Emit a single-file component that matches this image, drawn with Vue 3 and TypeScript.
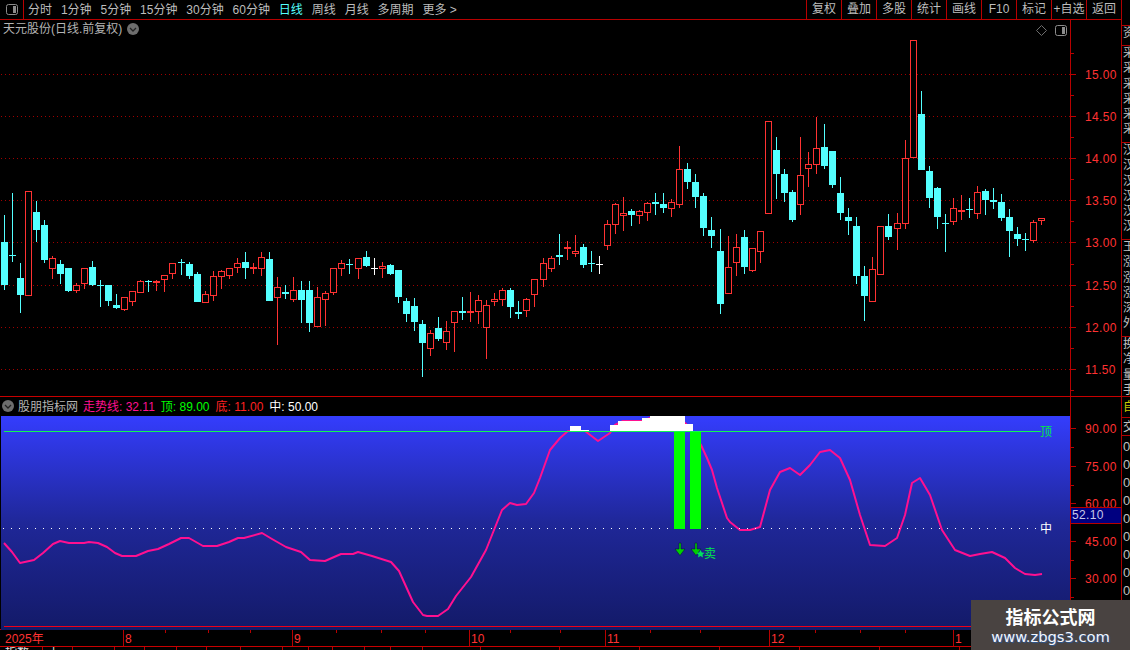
<script setup lang="ts">
type Kind = 'c' | 'r' | 'w'
interface Candle { x: number; kind: Kind; wt: number; wb: number; bt: number; bb: number }

// kind, wick top, wick bottom, body top, body bottom — values are 3x offsets from the group's base y
const groups: [number, string][] = [
  [180, 'c105,330,186,315 c39,246,226,228 c249,399,294,345 r34,347,34,347 c63,186,96,150 c120,249,135,240 r228,297,234,267 c240,312,252,282 c264,336,264,333 r309,339,315,333 r264,327,264,312 c243,318,261,315 c300,381,315,318 c315,378,315,363 c342,387,375,384 r351,393,351,390 r333,378,333,366 r300,339,303,339 c300,336,303,306 r300,333,303,309 r285,336,285,300 r249,297,249,282 c237,285,246,249 c246,297,252,288 c276,366,282,366 r333,369,342,369 r273,363,288,348 r270,327,273,291 r264,297,264,288 r234,279,249,264 c216,297,246,264 r249,282,261,267 r216,288,231,267 c216,363,237,363 r291,495,321,354 c315,357,336,342 r291,366,330,360'],
  [190, 'c273,399,300,330 c273,426,300,399 r291,411,321,411 r303,408,309,330 r234,315,234,309 r210,258,219,237 c207,252,222,225 r204,267,204,237 c183,231,201,228 w204,255,234,237 r216,264,228,237 c222,255,225,252 c240,339,240,321 c324,396,333,372 c324,423,348,396 c390,561,402,459 r420,498,429,477 c381,453,414,447 r393,480,423,459 r363,486,363,399 c321,390,363,369 r306,396,363,369 r315,402,330,366 r330,507,345,414 r309,348,327,336 r294,348,300,330 c294,384,300,351 c333,387,366,372 r324,381,327,363 r267,351,267,315'],
  [130, 'r384,471,399,450 r378,426,384,417 c312,405,375,381 r333,390,351,357 r315,381,363,372 c342,414,351,405 c363,426,399,402 w378,432,402,405 r270,360,282,348 r219,312,222,285 r201,303,249,258 c237,288,243,255 r240,282,243,258 r216,273,219,249 c189,255,216,222 c189,249,222,234 r207,261,216,237 r48,234,117,225 c99,177,117,156 c132,234,156,201 c189,318,198,294 c261,354,300,318 c297,552,363,522 r318,492,411,492 r312,438,351,399 c300,432,321,411 r354,426,354,423 r303,399,303,366'],
  [30, 'r273,552,273,552 c321,507,360,432 c417,516,432,489 c480,576,486,570 r321,555,435,525 r366,471,402,417 r261,432,354,405 c282,417,351,408 c363,474,363,465 c441,570,489,549 c534,615,561,573 c561,762,588,738 c708,873,738,798 r681,816,717,816 r588,735,588,735 c552,630,588,621 r549,660,579,597 r330,597,384,582 r30,384,30,384 c183,420,252,420 c408,534,423,504 c471,597,474,561 c552,666,579,582 r504,585,534,576 r495,570,540,546 c504,564,537,540 r468,567,486,552 c477,555,483,510 c474,537,510,516 c492,573,516,564 c537,681,561,603 c591,648,612,627 c609,663,627,630 r570,639,576,633 r564,585,564,573'],
]

const candles: Candle[] = []
for (const [base, s] of groups) {
  for (const tok of s.split(' ')) {
    const kind = tok[0] as Kind
    const [a, b, c, d] = tok.slice(1).split(',').map(Number)
    const i = candles.length
    candles.push({
      x: 4 + 8 * i + Math.floor((i + 1) / 22.39),
      kind,
      wt: Math.round(base + a / 3),
      wb: Math.round(base + b / 3),
      bt: Math.round(base + c / 3),
      bb: Math.round(base + d / 3),
    })
  }
}

const colors: Record<Kind, string> = { c: '#54ffff', r: '#ff3232', w: '#ffffff' }

const upperGrid = [74, 116, 158, 200, 242, 285, 327, 369]
const upperLabels = [
  { t: '15.00', y: 74 }, { t: '14.50', y: 116 }, { t: '14.00', y: 158 }, { t: '13.50', y: 200 },
  { t: '13.00', y: 242 }, { t: '12.50', y: 285 }, { t: '12.00', y: 327 }, { t: '11.50', y: 369 },
]
const upperMinor = [95, 137, 179, 221, 264, 306, 348, 390, 53]

const lowerLabels = [
  { t: '90.00', y: 428 }, { t: '75.00', y: 466 }, { t: '60.00', y: 503 }, { t: '45.00', y: 541 }, { t: '30.00', y: 578 },
]
const lowerMinor = [447, 485, 522, 560, 597, 616]

const curve: [number, number][] = [
  [4,543],[12,552],[20,563],[34,560],[43,553],[53,544],[60,541],[69,543],[84,543],[89,542],[98,543],[107,547],[115,553],[122,556],[136,556],[148,551],[158,549],[169,544],[181,538],[189,538],[203,546],[217,546],[229,542],[238,538],[244,538],[262,533],[272,539],[286,547],[301,552],[310,560],[325,561],[341,554],[353,554],[358,552],[372,556],[391,562],[399,571],[413,602],[423,615],[427,616],[438,616],[448,609],[456,596],[471,577],[486,550],[502,510],[510,503],[517,505],[526,504],[534,493],[540,478],[550,450],[560,438],[568,431],[585,431],[598,441],[610,433],[615,425],[623,421],[642,421],[650,418],[680,418],[690,428],[701,445],[707,458],[712,470],[717,488],[727,518],[730,522],[740,530],[750,530],[760,527],[770,490],[780,472],[790,468],[800,475],[810,465],[820,452],[830,450],[840,458],[850,480],[860,515],[870,545],[885,546],[897,538],[905,515],[912,483],[920,478],[930,495],[942,530],[955,550],[970,556],[980,554],[992,552],[1005,558],[1015,568],[1025,574],[1035,575],[1042,574],
]
const curvePoints = curve.map(p => p.join(',')).join(' ')

const caps = [
  [570, 426, 581], [581, 430, 589], [610, 425, 618], [618, 421, 642], [642, 418, 650], [650, 416, 685], [685, 424, 693],
].map(([x, y, x2]) => ({ x, y, w: x2 - x, h: 431 - y }))

const leftTools = ['分时', '1分钟', '5分钟', '15分钟', '30分钟', '60分钟', '日线', '周线', '月线', '多周期', '更多 >']
const rightTools = ['复权', '叠加', '多股', '统计', '画线', 'F10', '标记', '+自选', '返回']

const months = [
  { t: '8', x: 123 }, { t: '9', x: 292 }, { t: '10', x: 469 }, { t: '11', x: 605 }, { t: '12', x: 769 }, { t: '1', x: 953 },
]
const dateTicks = [165, 208, 250, 336, 381, 425, 510, 560, 650, 700, 815, 860, 905, 1000]

const bottomStops = [43, 73, 115, 145, 177, 207, 241, 283, 309, 333, 365, 391, 423, 481, 560, 640, 720, 800, 880, 960]
const bottomCells = bottomStops.map((s, i) => ({ w: s - (i ? bottomStops[i - 1] : 0) }))

const stripCells = [
  { h: 20, t: ['资'] },
  { h: 97, t: ['采', '采', '采', '采', '采', '采'] },
  { h: 97, t: ['汉', '汉', '汉', '汉', '汉', '汉'] },
  { h: 97, t: ['玉', '涨', '涨', '涨', '深', '外'] },
  { h: 60, t: ['换', '净', '量', '手'] },
]
const stripDigits = Array.from({ length: 9 }, () => '0')
</script>

<template>
  <div class="app">
    <div class="left">
      <div class="toolbar">
        <div class="winbtn">
          <svg width="12" height="11" viewBox="0 0 12 11">
            <rect x="0.5" y="0.5" width="11" height="10" rx="2" fill="none" stroke="#8c8c8c" />
            <rect x="7" y="2" width="3" height="7" fill="#8c8c8c" />
          </svg>
        </div>
        <div class="tools">
          <span v-for="t in leftTools" :key="t" :class="{ on: t === '日线' }">{{ t }}</span>
        </div>
        <div class="rtools">
          <span v-for="t in rightTools" :key="t">{{ t }}</span>
        </div>
      </div>

      <div class="pane upper">
        <div class="chart">
          <svg class="chart-svg" width="1070" height="376" viewBox="0 20 1070 376" shape-rendering="crispEdges">
            <defs>
              <pattern id="dots" x="0" y="0" width="4" height="1" patternUnits="userSpaceOnUse">
                <rect x="1" y="0" width="1" height="1" fill="#a00000" />
              </pattern>
            </defs>
            <rect v-for="y in upperGrid" :key="y" x="0" :y="y" width="1070" height="1" fill="url(#dots)" />
            <g v-for="(c, i) in candles" :key="i">
              <line v-if="c.wt < c.wb" :x1="c.x + 0.5" :y1="c.wt" :x2="c.x + 0.5" :y2="c.wb" :stroke="colors[c.kind]" />
              <rect v-if="c.kind === 'r' && c.bb - c.bt > 2" :x="c.x - 2.5" :y="c.bt + 0.5" width="6" :height="c.bb - c.bt - 1" fill="#000" :stroke="colors.r" />
              <rect v-else :x="c.x - 3" :y="c.bt" width="7" :height="Math.max(1, c.bb - c.bt)" :fill="colors[c.kind]" />
            </g>
          </svg>
          <div class="title">
            <span>天元股份(日线.前复权)</span>
            <svg width="12" height="12" viewBox="0 0 12 12">
              <circle cx="6" cy="6" r="6" fill="#6e6e6e" />
              <path d="M3 5 L6 8 L9 5" fill="none" stroke="#222" stroke-width="1.3" />
            </svg>
          </div>
          <div class="corner">
            <svg width="11" height="11" viewBox="0 0 11 11">
              <path d="M5.5 0.5 L10.5 5.5 L5.5 10.5 L0.5 5.5 Z" fill="none" stroke="#6e6e6e" />
            </svg>
            <svg width="12" height="11" viewBox="0 0 12 11">
              <rect x="0.5" y="0.5" width="11" height="10" rx="2" fill="none" stroke="#8c8c8c" />
              <rect x="7" y="2" width="3" height="7" fill="#8c8c8c" />
            </svg>
          </div>
        </div>
        <svg class="axis" width="50" height="376" viewBox="1071 20 50 376" shape-rendering="crispEdges">
          <template v-for="l in upperLabels" :key="l.t">
            <line x1="1071" :y1="l.y + 0.5" x2="1076" :y2="l.y + 0.5" class="tick" />
            <text x="1085" :y="l.y + 5" class="axis-text">{{ l.t }}</text>
          </template>
          <line v-for="y in upperMinor" :key="y" x1="1071" :y1="y + 0.5" x2="1074" :y2="y + 0.5" class="tick" />
        </svg>
      </div>

      <div class="pane lower">
        <div class="chart">
          <div class="legend">
            <svg width="12" height="12" viewBox="0 0 12 12">
              <circle cx="6" cy="6" r="6" fill="#6e6e6e" />
              <path d="M3 5 L6 8 L9 5" fill="none" stroke="#222" stroke-width="1.3" />
            </svg>
            <span class="gray">股朋指标网</span>
            <span class="pink">走势线: 32.11</span>
            <span class="green">顶: 89.00</span>
            <span class="red">底: 11.00</span>
            <span class="white">中: 50.00</span>
          </div>
          <svg class="chart-svg" width="1070" height="214" viewBox="0 416 1070 214">
            <defs>
              <linearGradient id="panel" x1="0" y1="0" x2="0" y2="1">
                <stop offset="0" stop-color="#343dfd" />
                <stop offset="0.5" stop-color="#1f2798" />
                <stop offset="1" stop-color="#131a68" />
              </linearGradient>
            </defs>
            <rect x="1" y="416" width="1069" height="214" fill="url(#panel)" />
            <polyline :points="curvePoints" fill="none" stroke="#ff1090" stroke-width="2" stroke-linejoin="round" />
            <rect v-for="(c, i) in caps" :key="i" :x="c.x" :y="c.y" :width="c.w" :height="c.h" fill="#fff" shape-rendering="crispEdges" />
            <line x1="4" y1="431.5" x2="1041" y2="431.5" stroke="#10f850" shape-rendering="crispEdges" />
            <line x1="3" y1="528.5" x2="1040" y2="528.5" stroke="#fff" stroke-dasharray="1 7" shape-rendering="crispEdges" />
            <rect x="674" y="432" width="11" height="97" fill="#00ff00" shape-rendering="crispEdges" />
            <rect x="690" y="432" width="11" height="97" fill="#00ff00" shape-rendering="crispEdges" />
            <line x1="4" y1="626.5" x2="1070" y2="626.5" stroke="#f00018" shape-rendering="crispEdges" />
            <g v-for="x in [680, 696]" :key="x">
              <path :d="`M${x - 1} 543 h2 v6 h4 l-5 6.5 l-5 -6.5 h4 z`" fill="#00d000" stroke="#04083a" stroke-width="0.5" />
            </g>
            <path d="M700.5 550 l1.3 2.4 l2.7 .4 l-2 1.9 l.5 2.7 l-2.5 -1.3 l-2.5 1.3 l.5 -2.7 l-2 -1.9 l2.7 -.4 z" fill="#00e060" />
            <text x="704" y="558" class="mark green-fill">卖</text>
            <text x="1040" y="436" class="mark green-fill">顶</text>
            <text x="1040" y="533" class="mark white-fill">中</text>
          </svg>
        </div>
        <div class="axis-wrap">
          <svg class="axis" width="50" height="233" viewBox="1071 397 50 233" shape-rendering="crispEdges">
            <template v-for="l in lowerLabels" :key="l.t">
              <line x1="1071" :y1="l.y + 0.5" x2="1076" :y2="l.y + 0.5" class="tick" />
              <text x="1085" :y="l.y + 5" class="axis-text">{{ l.t }}</text>
            </template>
            <line v-for="y in lowerMinor" :key="y" x1="1071" :y1="y + 0.5" x2="1074" :y2="y + 0.5" class="tick" />
          </svg>
          <div class="cursor">52.10</div>
        </div>
      </div>

      <svg class="dates" width="1121" height="16" viewBox="0 630 1121 16" shape-rendering="crispEdges">
        <text x="5" y="643" class="date-text">2025年</text>
        <template v-for="m in months" :key="m.t">
          <line :x1="m.x + 0.5" y1="630" :x2="m.x + 0.5" y2="646" class="tick" />
          <text :x="m.x + 2" y="643" class="date-text">{{ m.t }}</text>
        </template>
        <line v-for="x in dateTicks" :key="x" :x1="x + 0.5" y1="630" :x2="x + 0.5" y2="633" class="tick" />
      </svg>

      <div class="bottom">
        <span v-for="(c, i) in bottomCells" :key="i" :style="{ width: c.w + 'px' }">{{ i === 0 ? '指数' : i === 1 ? '上' : '' }}</span>
      </div>
    </div>

    <div class="strip">
      <div class="strip-top">
        <div v-for="(c, i) in stripCells" :key="i" class="strip-cell" :style="{ height: c.h + 'px' }">
          <span v-for="(ch, j) in c.t" :key="j">{{ ch }}</span>
        </div>
      </div>
      <div class="strip-self">自</div>
      <div class="strip-head">交</div>
      <div class="strip-nums">
        <span v-for="(d, i) in stripDigits" :key="i">{{ d }}</span>
      </div>
    </div>

    <div class="watermark">
      <div class="wm-title">指标公式网</div>
      <div class="wm-url">www.zbgs3.com</div>
    </div>
  </div>
</template>

<style scoped>
.app {
  position: relative;
  display: flex;
  width: 1130px;
  height: 650px;
  overflow: hidden;
  background: #000;
  font-family: "Liberation Sans", "Noto Sans CJK SC", sans-serif;
  font-size: 12px;
  color: #bdbdbd;
}
.left {
  display: flex;
  flex-direction: column;
  width: 1122px;
  flex: none;
  border-right: 1px solid #b00000;
  box-sizing: border-box;
}
.toolbar {
  display: flex;
  align-items: center;
  height: 20px;
  flex: none;
  border-bottom: 1px solid #b80000;
  box-sizing: border-box;
  line-height: 18px;
}
.winbtn {
  display: flex;
  align-items: center;
  justify-content: center;
  width: 24px;
  height: 19px;
  box-sizing: border-box;
  border-right: 1px solid #b80000;
}
.tools {
  display: flex;
  gap: 8.9px;
  margin-left: 4px;
  flex: 1;
}
.tools .on {
  color: #54ffff;
}
.rtools {
  display: flex;
}
.rtools span {
  width: 35px;
  height: 19px;
  text-align: center;
  border-left: 1px solid #b80000;
  box-sizing: border-box;
  white-space: nowrap;
}
.pane {
  display: flex;
  flex: none;
}
.upper {
  height: 377px;
  border-bottom: 1px solid #c80000;
  box-sizing: border-box;
}
.lower {
  height: 233px;
}
.chart {
  position: relative;
  width: 1070px;
  flex: none;
  border-right: 1px solid #b80000;
}
.chart-svg,
.axis,
.dates {
  display: block;
  flex: none;
}
.tick {
  stroke: #b80000;
}
.axis-text {
  fill: #ff3232;
  font-family: "Liberation Sans", sans-serif;
  font-size: 12px;
  letter-spacing: 0.35px;
}
.date-text {
  fill: #ff3232;
  font-family: "Liberation Sans", "Noto Sans CJK SC", sans-serif;
  font-size: 12px;
}
.title {
  position: absolute;
  left: 3px;
  top: 0;
  display: flex;
  align-items: center;
  gap: 5px;
  line-height: 18px;
  color: #b4b4b4;
}
.corner {
  position: absolute;
  right: 3px;
  top: 5px;
  display: flex;
  align-items: center;
  gap: 8px;
}
.legend {
  display: flex;
  align-items: center;
  height: 19px;
  padding: 0 0 2px 2px;
  box-sizing: border-box;
  white-space: nowrap;
}
.legend span {
  margin-left: 6px;
}
.legend .gray {
  margin-left: 4px;
  color: #b4b4b4;
}
.legend .pink {
  margin-left: 5px;
  color: #ff1090;
}
.legend .green {
  color: #00ff00;
}
.legend .red {
  color: #ff2020;
}
.legend .white {
  color: #fff;
}
.mark {
  font-size: 12px;
  font-family: "Noto Sans CJK SC", sans-serif;
}
.green-fill {
  fill: #00e848;
}
.white-fill {
  fill: #fff;
}
.axis-wrap {
  position: relative;
  width: 50px;
}
.cursor {
  position: absolute;
  left: 0;
  right: 0;
  top: 110px;
  height: 17px;
  box-sizing: border-box;
  background: #000080;
  border-top: 1px solid #b80000;
  border-bottom: 1px solid #b80000;
  color: #c8c8e8;
  line-height: 15px;
  padding-left: 1px;
  font-family: "Liberation Sans", sans-serif;
  letter-spacing: 0.35px;
}
.dates {
  border-top: 1px solid #c80000;
  margin-top: -1px;
}
.bottom {
  display: flex;
  height: 5px;
  overflow: hidden;
  border-top: 1px solid #c80000;
  box-sizing: border-box;
  color: #e0e0e0;
  line-height: 12px;
}
.bottom span {
  flex: none;
  box-sizing: border-box;
  border-right: 1px solid #b80000;
  padding-left: 5px;
  overflow: hidden;
}
.strip {
  display: flex;
  flex-direction: column;
  width: 8px;
  flex: none;
  overflow: hidden;
  color: #c0c0c0;
  padding-top: 25px;
  box-sizing: border-box;
}
.strip-top {
  flex: none;
  height: 372px;
  border-top: 1px solid #b00000;
  box-sizing: border-box;
}
.strip-cell {
  display: flex;
  flex-direction: column;
  align-items: flex-start;
  box-sizing: border-box;
  border-bottom: 1px solid #b00000;
  padding-left: 1px;
  line-height: 15.3px;
  overflow: hidden;
  white-space: nowrap;
}
.strip-cell span {
  width: 12px;
  flex: none;
}
.strip-self {
  height: 21px;
  padding-left: 1px;
  line-height: 21px;
  color: #c8c800;
  white-space: nowrap;
  border-bottom: 1px solid #b00000;
  box-sizing: border-box;
}
.strip-head {
  height: 18px;
  padding-left: 1px;
  line-height: 18px;
  white-space: nowrap;
  border-bottom: 1px solid #b00000;
  box-sizing: border-box;
}
.strip-nums {
  display: flex;
  flex-direction: column;
  padding: 2px 0 0 1px;
  line-height: 18px;
  font-size: 13px;
}
.watermark {
  position: absolute;
  left: 971px;
  top: 600px;
  width: 159px;
  height: 50px;
  background: #494341;
  text-align: center;
}
.wm-title {
  margin-top: 4px;
  height: 24px;
  line-height: 24px;
  font-family: "Noto Sans CJK SC", sans-serif;
  font-size: 18px;
  font-weight: 700;
  color: #fff;
}
.wm-url {
  line-height: 17px;
  font-family: "DejaVu Sans", sans-serif;
  font-size: 14.7px;
  color: #f2f6ff;
  text-shadow: 1px 1px 1px #2a5a9a;
}
</style>

<style>
html,
body {
  margin: 0;
  background: #000;
  overflow: hidden;
}
</style>
